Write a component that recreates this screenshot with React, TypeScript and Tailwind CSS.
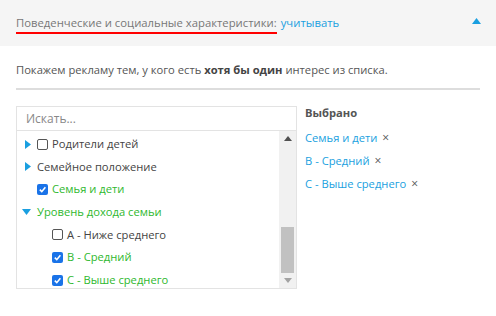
import React from "react";

const F = { fontFamily: '"Open Sans", "Noto Sans", sans-serif' };

function Box({ checked }: { checked: boolean }) {
  if (checked) {
    return (
      <span className="block w-[11px] h-[11px] rounded-[2px] bg-[#1a73e8] flex items-center justify-center shrink-0">
        <svg width="9" height="9" viewBox="0 0 10 10">
          <path d="M2 5.2 L4.2 7.4 L8.2 2.6" stroke="white" strokeWidth="1.8" fill="none" />
        </svg>
      </span>
    );
  }
  return <span className="block w-[11px] h-[11px] rounded-[2px] border border-[#555] bg-white shrink-0" />;
}

function TriRight() {
  return (
    <svg width="6" height="9" viewBox="0 0 6 9" className="shrink-0">
      <path d="M0 0 L6 4.5 L0 9 Z" fill="#1a9fe0" />
    </svg>
  );
}
function TriDown() {
  return (
    <svg width="9" height="6" viewBox="0 0 9 6" className="shrink-0">
      <path d="M0 0 L9 0 L4.5 6 Z" fill="#1a9fe0" />
    </svg>
  );
}

export default function App() {
  return (
    <div className="w-[496px] h-[316px] bg-white text-[11.2px]" style={F}>
      <div className="h-[46px] bg-[#f5f5f5] flex items-center pl-4 pr-[15px]">
        <span className="text-[#777] text-[11.3px] border-b-2 border-[#ff0000] leading-[16px] pt-[2px] pb-[1px]">
          Поведенческие и социальные характеристики:
        </span>
        <span className="text-[#1a9fe0] text-[11.3px] ml-[4px] leading-[16px] pb-[1px]">учитывать</span>
        <span className="flex-1" />
        <svg width="9" height="6" viewBox="0 0 9 6" className="mb-[4px]">
          <path d="M0 6 L9 6 L4.5 0 Z" fill="#1a9fe0" />
        </svg>
      </div>
      <div className="px-4">
        <div className="pt-[15px] pb-[10px] text-[#555] text-[11.2px] leading-[17px]">
          Покажем рекламу тем, у кого есть <b className="font-bold text-[#444]">хотя бы один</b> интерес из списка.
        </div>
        <div className="h-[2px] bg-[#ddd]" />
        <div className="flex mt-[16px]">
          <div className="w-[281px] border border-[#e3e3e3] flex flex-col">
            <div className="h-[24px] flex items-center pl-[9px] text-[#888] text-[12px] border-b border-[#e3e3e3]">
              Искать...
            </div>
            <div className="flex h-[157px]">
              <div className="flex-1 text-[11.2px] text-[#444] pt-[2px]">
                <div className="h-[22.67px] flex items-center pl-[8px]">
                  <TriRight />
                  <span className="ml-[6px]"><Box checked={false} /></span>
                  <span className="ml-[4px]">Родители детей</span>
                </div>
                <div className="h-[22.67px] flex items-center pl-[8px] gap-[6px]">
                  <TriRight />
                  <span>Семейное положение</span>
                </div>
                <div className="h-[22.67px] flex items-center pl-[20px] gap-[4px] text-[#2eb82e]">
                  <Box checked />
                  <span>Семья и дети</span>
                </div>
                <div className="h-[22.67px] flex items-center pl-[5px] gap-[6px] text-[#2eb82e]">
                  <TriDown />
                  <span>Уровень дохода семьи</span>
                </div>
                <div className="h-[22.67px] flex items-center pl-[35px] gap-[4px]">
                  <Box checked={false} />
                  <span>A - Ниже среднего</span>
                </div>
                <div className="h-[22.67px] flex items-center pl-[35px] gap-[4px] text-[#2eb82e]">
                  <Box checked />
                  <span>B - Средний</span>
                </div>
                <div className="h-[22.67px] flex items-center pl-[35px] gap-[4px] text-[#2eb82e]">
                  <Box checked />
                  <span>C - Выше среднего</span>
                </div>
              </div>
              <div className="w-[17px] bg-[#f1f1f1] flex flex-col items-center">
                <div className="h-[14px] flex items-center justify-center">
                  <svg width="8" height="5" viewBox="0 0 8 5"><path d="M0 5 L8 5 L4 0 Z" fill="#505050" /></svg>
                </div>
                <div className="flex-1 w-full flex flex-col justify-end px-[2px]">
                  <div className="h-[46px] bg-[#c1c1c1]" />
                </div>
                <div className="h-[15px] flex items-center justify-center">
                  <svg width="8" height="5" viewBox="0 0 8 5"><path d="M0 0 L8 0 L4 5 Z" fill="#a3a3a3" /></svg>
                </div>
              </div>
            </div>
          </div>
          <div className="ml-[8px] text-[11.2px]">
            <div className="font-bold text-[#555] leading-[17px] -mt-[2px]">Выбрано</div>
            <div className="mt-[8px] flex flex-col gap-[6px] text-[#1a9fe0]">
              <div className="leading-[17px]">Семья и дети <span className="text-[#555] text-[12px] ml-[2px]">×</span></div>
              <div className="leading-[17px]">B - Средний <span className="text-[#555] text-[12px] ml-[2px]">×</span></div>
              <div className="leading-[17px]">C - Выше среднего <span className="text-[#555] text-[12px] ml-[2px]">×</span></div>
            </div>
          </div>
        </div>
      </div>
    </div>
  );
}
